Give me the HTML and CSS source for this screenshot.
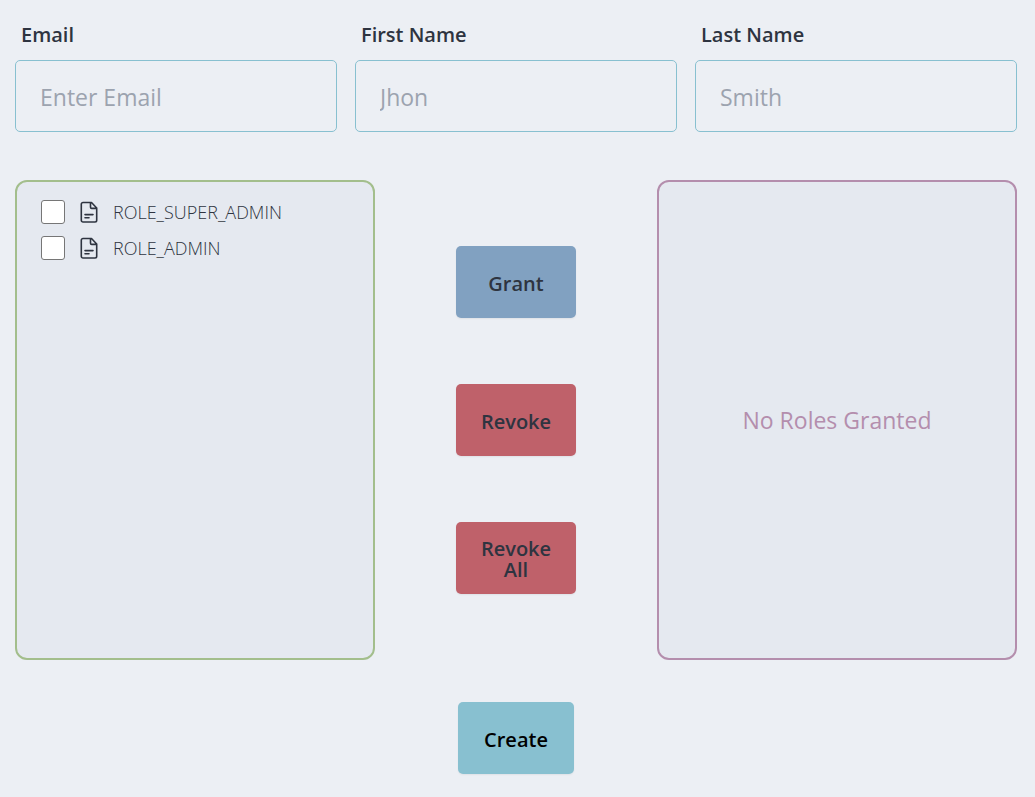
FILE: index.html
```html
<!DOCTYPE html>
<html lang="en">
<head>
<meta charset="utf-8">
<meta name="viewport" content="width=device-width, initial-scale=1">
<title>Create User</title>
<link rel="stylesheet" href="styles.css">
</head>
<body>
<form class="user-form">
  <div class="fields">
    <div class="field">
      <label class="field-label" for="email">Email</label>
      <input class="field-input" id="email" type="email" placeholder="Enter Email">
    </div>
    <div class="field">
      <label class="field-label" for="first-name">First Name</label>
      <input class="field-input" id="first-name" type="text" placeholder="Jhon">
    </div>
    <div class="field">
      <label class="field-label" for="last-name">Last Name</label>
      <input class="field-input" id="last-name" type="text" placeholder="Smith">
    </div>
  </div>

  <div class="roles">
    <ul class="panel panel-available">
      <li>
        <label class="role">
          <input class="role-check" type="checkbox">
          <svg class="role-icon" viewBox="0 0 18 22" aria-hidden="true"><path d="M3 1.5h8.5L16.7 7v12.3a1.7 1.7 0 0 1-1.7 1.7H3a1.7 1.7 0 0 1-1.7-1.7V3.2A1.7 1.7 0 0 1 3 1.5zM10.5 1.8v4.4a1.2 1.2 0 0 0 1.2 1.2h4.8M5 13.6h8M5 16.8h4"/></svg>
          <span>ROLE_SUPER_ADMIN</span>
        </label>
      </li>
      <li>
        <label class="role">
          <input class="role-check" type="checkbox">
          <svg class="role-icon" viewBox="0 0 18 22" aria-hidden="true"><path d="M3 1.5h8.5L16.7 7v12.3a1.7 1.7 0 0 1-1.7 1.7H3a1.7 1.7 0 0 1-1.7-1.7V3.2A1.7 1.7 0 0 1 3 1.5zM10.5 1.8v4.4a1.2 1.2 0 0 0 1.2 1.2h4.8M5 13.6h8M5 16.8h4"/></svg>
          <span>ROLE_ADMIN</span>
        </label>
      </li>
    </ul>
    <div class="actions">
      <button class="btn btn-grant" type="button">Grant</button>
      <button class="btn btn-revoke" type="button">Revoke</button>
      <button class="btn btn-revoke" type="button">Revoke All</button>
    </div>
    <div class="panel panel-granted">
      <p class="empty">No Roles Granted</p>
    </div>
  </div>

  <button class="btn btn-create" type="submit">Create</button>
</form>
</body>
</html>
```
FILE: styles.css
```css
* {
  box-sizing: border-box;
}

body {
  margin: 0;
  background: #eceff4;
  color: #2e3440;
  font-family: "Segoe UI", "Open Sans", "Noto Sans", sans-serif;
  font-size: 20px;
}

.user-form {
  display: flex;
  flex-direction: column;
  padding: 18px 18px 23px 15px;
}

.fields {
  display: grid;
  grid-template-columns: repeat(3, 1fr);
  gap: 18px;
}

.field {
  display: flex;
  flex-direction: column;
  gap: 8px;
}

.field-label {
  padding-left: 6px;
  font-size: 20px;
  font-weight: 600;
  line-height: 34px;
}

.field-input {
  width: 100%;
  height: 72px;
  padding: 2px 24px 0;
  border: 1px solid #88c0d0;
  border-radius: 5px;
  background: transparent;
  color: inherit;
  font: inherit;
  font-size: 23px;
}

.field-input::placeholder {
  color: #9ca3af;
  opacity: 1;
}

.roles {
  display: grid;
  grid-template-columns: 60fr 47fr 60fr;
  margin-top: 48px;
}

.panel {
  min-height: 480px;
  margin: 0;
  border: 2px solid;
  border-radius: 12px;
  background: #e5e9f0;
}

.panel-available {
  padding: 12px 24px;
  border-color: #a3be8c;
  list-style: none;
}

.panel-granted {
  display: flex;
  align-items: center;
  justify-content: center;
  border-color: #b48ead;
}

.role {
  display: flex;
  align-items: center;
  height: 36px;
  font-size: 18px;
  font-weight: 300;
}

.role-check {
  appearance: none;
  width: 24px;
  height: 24px;
  margin: 0 15px 0 0;
  border: 1px solid #767676;
  border-radius: 3px;
  background: #fff;
}

.role-check:checked {
  background: #5e81ac;
}

.role-icon {
  width: 18px;
  height: 22px;
  margin-right: 15px;
  fill: none;
  stroke: #2e3440;
  stroke-width: 1.6;
  stroke-linecap: round;
  stroke-linejoin: round;
}

.empty {
  margin: 0;
  color: #b48ead;
  font-size: 23px;
}

.actions {
  display: flex;
  flex-direction: column;
  align-items: center;
  justify-content: space-evenly;
}

.btn {
  width: 120px;
  height: 72px;
  padding: 2px 24px 0;
  border: 0;
  border-radius: 5px;
  box-shadow: 0 1px 2px rgba(0, 0, 0, 0.06);
  color: inherit;
  font: inherit;
  font-weight: 600;
  line-height: 21px;
}

.btn-grant {
  background: #81a1c1;
}

.btn-revoke {
  background: #bf616a;
}

.btn-create {
  align-self: center;
  width: auto;
  margin-top: 42px;
  padding: 2px 26px 0;
  background: #88c0d0;
  color: #000;
}
```
